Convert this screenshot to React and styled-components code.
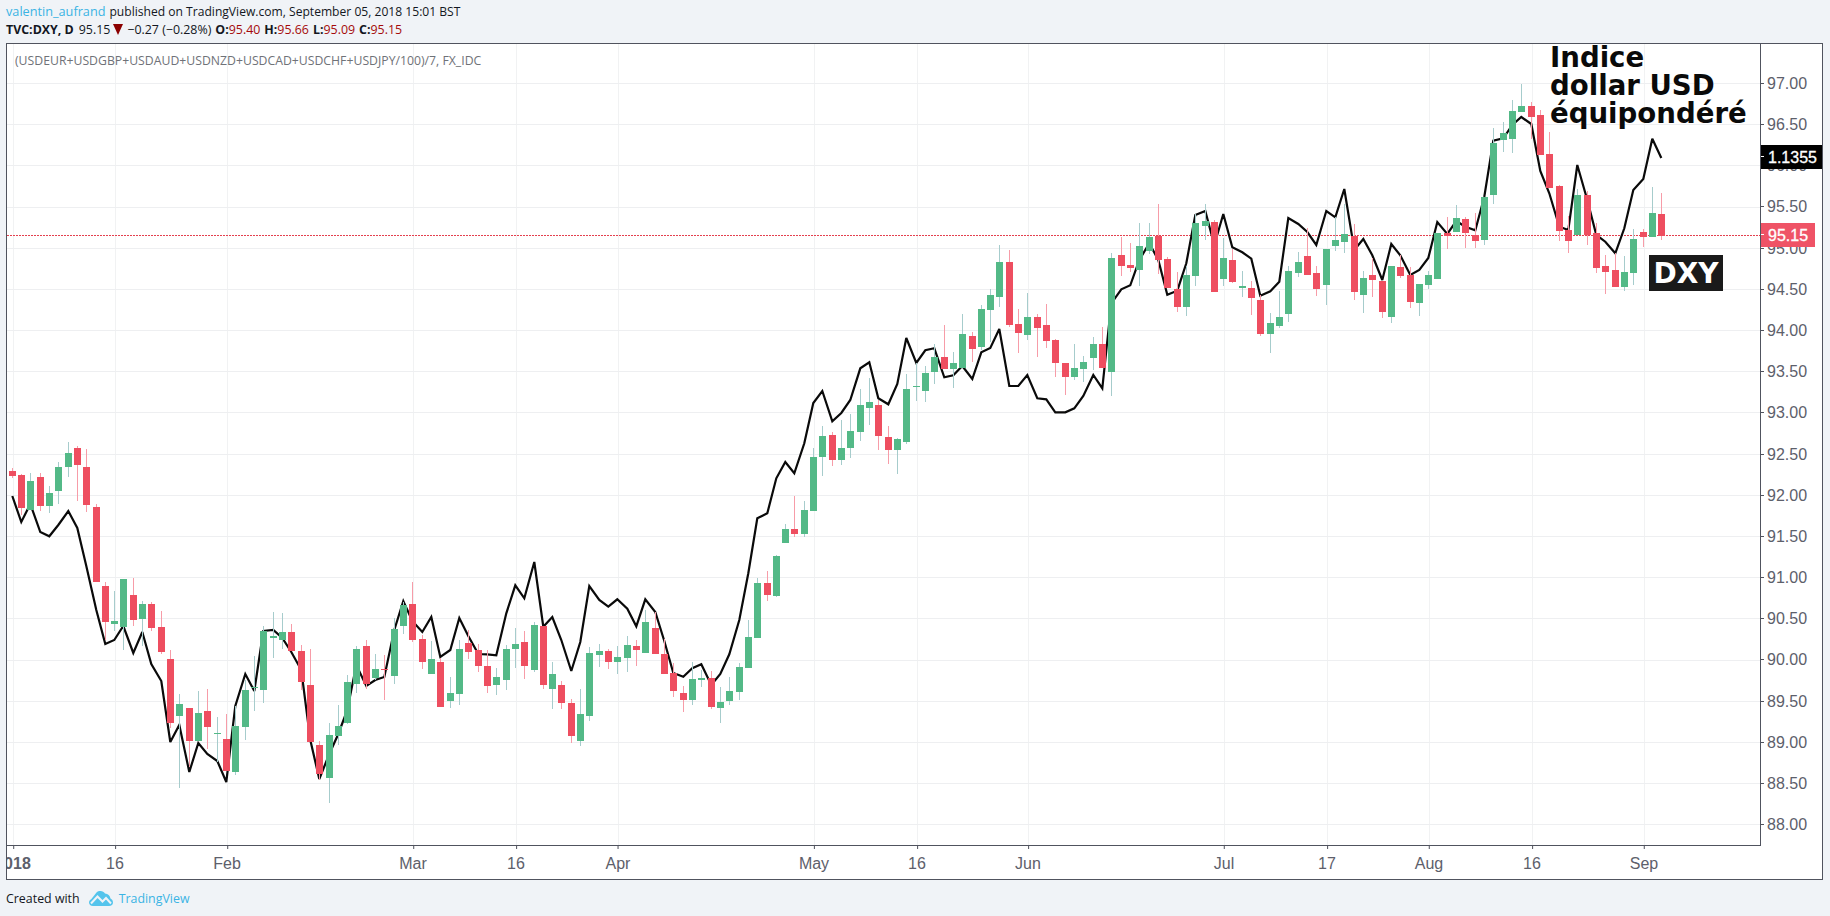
import React from "react";
import styled, { createGlobalStyle } from "styled-components";

const GlobalStyle = createGlobalStyle`
  html, body { margin: 0; padding: 0; background: #f0f3f7; }
  body { font-family: "Open Sans", "Liberation Sans", sans-serif; }
  #root { width: 1830px; height: 916px; overflow: hidden; }
`;

const Page = styled.div`
  width: 1830px;
  height: 916px;
  background: #f0f3f7;
  display: flex;
  flex-direction: column;
`;
const Header = styled.header`
  height: 43px;
  box-sizing: border-box;
  padding: 3px 0 0 6px;
  line-height: 17.5px;
  color: #131722;
  white-space: nowrap;
`;
const Line = styled.div`
  display: flex;
  align-items: center;
  height: 17.5px;
  font-size: ${(p) => p.$size}px;
`;
const Author = styled.span`
  color: #3bb3e4;
  font-size: 12.7px;
  margin-right: 4px;
`;
const Bold = styled.span`
  font-weight: 700;
  margin-left: ${(p) => p.$gap || 0}px;
`;
const Plain = styled.span`
  margin-left: ${(p) => p.$gap || 0}px;
`;
const Down = styled.span`
  color: #a50a0a;
`;
const Triangle = styled.svg`
  width: 10px;
  height: 11px;
  margin: 0 4px 0 3px;
  flex: none;
`;
const Frame = styled.main`
  width: 1817px;
  height: 837px;
  margin-left: 6px;
  box-sizing: border-box;
  border: 1px solid #50535e;
  background: #fff;
  display: grid;
  grid-template-columns: 1754px 61px;
  grid-template-rows: 802px 33px;
  overflow: hidden;
  position: relative;
`;
const Plot = styled.div`
  position: relative;
  box-sizing: border-box;
  border-right: 1px solid #50535e;
  border-bottom: 1px solid #50535e;
  overflow: hidden;
`;
const ChartSvg = styled.svg`
  display: block;
  width: 1753px;
  height: 801px;
`;
const StudyTitle = styled.div`
  position: absolute;
  left: 8px;
  top: 8px;
  font-size: 12.25px;
  line-height: 18px;
  color: #6f7278;
  white-space: nowrap;
`;
const Caption = styled.div`
  position: absolute;
  left: 1543px;
  top: 0;
  font-family: "DejaVu Sans", sans-serif;
  font-weight: 700;
  font-size: 27.6px;
  line-height: 28px;
  color: #0a0a0a;
`;
const Symbol = styled.div`
  position: absolute;
  left: 1642px;
  top: 211px;
  width: 74px;
  height: 36px;
  background: #1a1a1a;
  color: #fff;
  display: flex;
  align-items: center;
  justify-content: center;
  font-family: "DejaVu Sans", sans-serif;
  font-weight: 700;
  font-size: 28px;
`;
const PriceAxis = styled.div`
  position: relative;
  overflow: hidden;
  padding-top: 18.4px;
  box-sizing: border-box;
`;
const PriceRow = styled.div`
  position: relative;
  height: 41.18px;
  box-sizing: border-box;
  display: flex;
  align-items: center;
  padding: 2px 0 0 6px;
  font-family: "Liberation Sans", Arial, sans-serif;
  font-size: 16px;
  color: #5d606b;
  &::before {
    content: "";
    position: absolute;
    left: 0;
    top: 50%;
    width: 3px;
    height: 1px;
    background: #50535e;
  }
`;
const PriceTag = styled.div`
  position: absolute;
  left: 0;
  top: ${(p) => p.$top}px;
  width: ${(p) => p.$width}px;
  height: 24px;
  box-sizing: border-box;
  padding: 2px 0 0 7px;
  display: flex;
  align-items: center;
  background: ${(p) => p.$bg};
  color: #fff;
  font-family: "Liberation Sans", Arial, sans-serif;
  font-size: 16px;
  -webkit-text-stroke: 0.3px #fff;
  &::before {
    content: "";
    position: absolute;
    left: 0;
    top: 11px;
    width: 3px;
    height: 1px;
    background: #fff;
  }
`;
const TimeAxis = styled.div`
  position: relative;
  overflow: hidden;
`;
const TimeLabel = styled.span`
  position: absolute;
  top: 8px;
  transform: translateX(-50%);
  font-family: "Liberation Sans", Arial, sans-serif;
  font-size: 16px;
  line-height: 20px;
  font-weight: ${(p) => (p.$bold ? 700 : 400)};
  color: #5d606b;
  &::before {
    content: "";
    position: absolute;
    left: 50%;
    top: -8px;
    width: 1px;
    height: 3px;
    background: #50535e;
  }
`;
const Footer = styled.footer`
  height: 36px;
  display: flex;
  align-items: center;
  padding-left: 6px;
  font-size: 12.4px;
  color: #131722;
`;
const Logo = styled.svg`
  width: 24px;
  height: 15px;
  margin: 0 6px 0 9px;
`;
const Brand = styled.span`
  color: #3bb3e4;
`;

// Measured as [x, wick top, body top, body bottom, wick bottom, colour], in crops scaled 3x.
const toCandles = (ox, oy, rows) =>
  rows.map(([x, a, b, c, d, k]) => ({
    x: Math.floor(ox + x / 3),
    wt: Math.round(oy + a / 3),
    bt: Math.round(oy + b / 3),
    bb: Math.round(oy + c / 3),
    wb: Math.round(oy + d / 3),
    up: k === "G",
  }));

const candles = [
  ...toCandles(0, 420, [
    [37,143,153,168,175,"R"],[64,162,165,264,285,"R"],[91,159,183,270,270,"G"],[121,159,171,258,273,"R"],
    [148,198,219,258,279,"G"],[175,126,141,213,252,"G"],[205,66,99,141,171,"G"],[232,78,84,135,243,"R"],
    [259,87,141,255,276,"R"],[289,252,261,486,486,"R"],[316,486,498,606,660,"R"],[343,513,603,612,633,"G"],
    [370,477,477,621,690,"G"],[400,474,525,600,618,"R"],[427,543,552,597,678,"G"],[454,546,552,624,633,"R"],
    [484,573,621,696,702,"R"],[511,690,717,909,925,"R"],[538,822,852,888,1104,"G"],[568,864,864,963,1040,"R"],
    [595,813,879,963,963,"G"],[622,807,873,921,987,"R"],[652,891,939,942,1025,"G"],[679,882,957,1053,1053,"R"],
    [706,858,918,1056,1065,"G"],[736,780,810,921,960,"G"],[763,708,800,803,873,"G"],[790,618,633,810,849,"G"],
    [820,576,649,653,714,"G"],[847,579,636,660,687,"G"],[874,612,636,693,693,"R"],[904,675,693,786,810,"R"],
    [931,687,795,966,966,"R"],[958,963,975,1062,1080,"R"],[988,909,945,1074,1149,"G"],[1015,855,918,948,975,"G"],
    [1042,765,786,909,912,"G"],[1069,678,687,792,819,"G"],[1099,660,678,792,807,"R"],[1126,702,747,774,780,"G"],
    [1153,705,747,750,840,"R"],[1183,594,627,768,792,"G"],[1210,546,555,618,642,"G"],[1237,486,552,660,666,"R"],
    [1267,645,657,726,747,"R"],[1294,663,717,762,762,"G"],[1321,714,726,861,861,"R"],[1351,771,819,843,864,"G"],
    [1378,660,687,822,855,"G"],
  ]),
  ...toCandles(460, 480, [
    [25,450,489,516,537,"R"],[55,492,510,558,576,"R"],[82,510,558,618,639,"R"],[109,564,591,615,645,"G"],
    [139,495,507,600,630,"G"],[166,444,492,507,564,"G"],[193,453,486,558,597,"R"],[223,426,435,570,576,"G"],
    [250,438,438,615,627,"R"],[277,546,582,627,687,"G"],[304,603,615,669,687,"R"],[334,657,669,768,789,"R"],
    [361,627,702,783,798,"G"],[388,501,519,708,723,"G"],[418,492,513,525,561,"G"],[445,507,513,546,567,"R"],
    [472,498,531,546,582,"G"],[502,468,495,534,576,"G"],[529,480,498,510,558,"R"],[556,390,426,519,519,"G"],
    [586,396,444,522,522,"R"],[613,477,522,582,582,"R"],[640,549,579,633,651,"R"],[670,618,639,660,696,"R"],
    [697,546,597,660,675,"G"],[724,570,594,600,621,"G"],[754,573,594,681,687,"R"],[781,621,666,684,729,"G"],
    [808,591,633,663,675,"G"],[838,549,561,636,660,"G"],[865,420,471,564,564,"G"],[892,294,309,474,474,"G"],
    [922,273,309,345,363,"R"],[949,225,228,348,351,"G"],
  ]),
  ...toCandles(780, 220, [
    [16,912,927,970,970,"G"],[43,828,927,942,950,"R"],[73,843,870,942,950,"G"],[100,684,711,873,873,"G"],
    [127,618,648,711,768,"G"],[157,636,645,720,738,"R"],[184,600,684,720,735,"G"],[211,582,633,684,714,"G"],
    [241,507,555,636,663,"G"],[268,474,546,564,615,"G"],[295,540,555,648,690,"R"],[325,618,651,690,732,"R"],
    [352,654,657,690,762,"G"],[379,462,507,666,672,"G"],[409,430,498,500,543,"G"],[436,438,459,513,546,"G"],
    [463,372,411,456,492,"G"],[493,315,411,447,447,"R"],[520,396,429,447,504,"G"],[547,282,342,444,444,"G"],
    [577,336,348,387,426,"R"],[604,255,267,381,390,"G"],[631,207,225,270,366,"G"],[658,75,126,231,261,"G"],
    [688,90,126,315,321,"R"],[715,267,312,339,399,"R"],[742,219,291,345,360,"G"],[772,282,291,324,411,"R"],
    [799,252,315,363,384,"R"],[826,357,360,429,471,"R"],[856,429,429,471,525,"R"],[883,372,444,471,480,"G"],
    [910,408,426,447,486,"G"],[940,351,372,414,450,"G"],[967,321,372,444,444,"R"],[994,99,114,456,528,"G"],
    [1024,51,105,138,168,"R"],[1051,69,135,144,156,"R"],[1078,9,78,150,198,"G"],
  ]),
  ...toCandles(1140, 170, [
    [28,159,201,243,252,"G"],[55,102,197,270,312,"R"],[82,261,267,354,354,"R"],[112,306,357,411,426,"R"],
    [139,288,315,411,438,"G"],[166,132,159,318,348,"G"],[196,102,153,168,210,"G"],[223,150,156,366,366,"R"],
    [250,205,264,327,348,"G"],[277,237,270,336,340,"R"],[307,303,348,354,381,"G"],[334,333,354,384,435,"R"],
    [361,375,390,492,498,"R"],[391,429,459,492,549,"G"],[418,363,441,468,474,"G"],[445,288,303,432,456,"G"],
    [475,246,276,309,321,"G"],[502,174,258,315,315,"R"],[529,288,309,357,378,"R"],[559,237,237,345,405,"G"],
    [586,140,210,228,243,"G"],[613,102,192,216,249,"G"],[643,162,197,366,390,"R"],[670,303,324,375,429,"G"],
    [697,264,315,330,381,"R"],[727,333,333,426,444,"R"],[754,288,288,441,459,"G"],[781,255,291,318,324,"R"],
    [811,291,315,396,414,"R"],[838,342,342,399,438,"G"],[865,303,315,345,357,"G"],[892,189,189,327,327,"G"],
    [922,141,189,198,237,"R"],[949,105,144,186,186,"G"],[976,141,147,189,234,"R"],[1006,129,195,213,234,"R"],
    [1033,81,81,210,225,"G"],
  ]),
  ...toCandles(1440, 70, [
    [160,174,219,375,402,"G"],[190,156,189,210,246,"G"],[217,90,123,207,249,"G"],[244,42,108,126,126,"G"],
    [274,96,108,141,207,"R"],[301,120,135,255,255,"R"],[328,186,252,354,354,"R"],[358,345,348,483,513,"R"],
    [385,438,480,513,549,"R"],[412,357,375,495,495,"G"],[442,363,375,495,525,"R"],[469,459,489,594,609,"R"],
    [496,555,588,606,672,"R"],[526,549,600,651,651,"R"],[553,558,606,651,663,"G"],[580,477,507,609,645,"G"],
    [610,477,486,501,531,"R"],[637,351,429,501,501,"G"],[664,369,432,498,510,"R"],
  ]),
];

const toPoints = (ox, oy, rows) => rows.map(([x, y]) => `${(ox + x / 3).toFixed(1)},${(oy + y / 3).toFixed(1)}`);

const linePoints = [
  ...toPoints(0, 420, [
    [37,228],[64,306],[91,252],[121,336],[148,349],[175,315],[205,273],[232,324],[259,438],[289,570],[316,672],
    [343,660],[370,618],[400,699],[427,636],[454,732],[484,783],[511,966],[538,915],[568,1056],[595,969],
    [622,1002],[652,1023],[679,1086],[706,858],[736,762],[763,813],[790,633],[820,630],[847,654],[874,696],
    [904,750],[931,960],[958,1077],[988,1002],[1015,942],[1042,870],[1069,735],[1099,798],[1126,780],
    [1153,771],[1183,630],[1210,543],[1237,603],[1267,636],[1294,591],[1321,711],[1351,690],[1378,594],
  ]),
  ...toPoints(460, 480, [
    [25,468],[55,522],[82,523],[109,526],[139,400],[166,316],[193,355],[223,246],[250,440],[277,411],[304,480],
    [334,573],[361,486],[388,318],[418,360],[445,380],[472,358],[502,386],[529,439],[556,358],[586,396],
    [613,483],[640,579],[670,590],[697,565],[724,553],[754,615],[781,582],[808,523],[838,420],[865,280],
    [892,115],[922,100],[949,-5],
  ]),
  ...toPoints(780, 220, [
    [16,726],[43,760],[73,670],[100,549],[127,513],[157,604],[184,579],[211,540],[241,445],[268,427],[295,535],
    [325,553],[352,492],[379,354],[409,429],[436,391],[463,385],[493,472],[520,466],[547,438],[577,477],
    [604,397],[631,384],[658,327],[688,498],[715,498],[742,465],[772,535],[799,538],[826,577],[856,577],
    [883,565],[910,528],[940,465],[967,505],[994,250],[1024,208],[1051,196],[1078,120],[1108,70],
  ]),
  ...toPoints(1140, 170, [
    [55,270],[82,374],[112,362],[139,280],[166,135],[196,123],[223,225],[250,132],[277,232],[307,247],[334,266],
    [361,377],[391,364],[418,335],[445,144],[475,162],[502,186],[529,225],[559,123],[586,142],[613,57],
    [643,240],[670,207],[697,256],[727,330],[754,222],[781,256],[811,315],[838,300],[865,264],[892,156],
    [922,192],[949,153],[976,170],[1006,181],
  ]),
  ...toPoints(1440, 70, [
    [133,380],[160,212],[190,205],[217,165],[244,141],[274,162],[301,303],[328,370],[358,470],[385,480],
    [412,285],[442,390],[469,495],[496,515],[526,550],[553,475],[580,360],[610,327],[637,206],[664,264],
  ]),
].join(" ");

const priceY = (v) => Math.round(83 + (97 - v) * 82.37);
const prices = Array.from({ length: 19 }, (_, i) => (97 - i * 0.5).toFixed(2));
const gridY = prices.map((p) => priceY(Number(p)));

const timeTicks = [
  { x: 13, label: "2018", bold: true },
  { x: 115, label: "16" },
  { x: 227, label: "Feb" },
  { x: 413, label: "Mar" },
  { x: 516, label: "16" },
  { x: 618, label: "Apr" },
  { x: 814, label: "May" },
  { x: 917, label: "16" },
  { x: 1028, label: "Jun" },
  { x: 1224, label: "Jul" },
  { x: 1327, label: "17" },
  { x: 1429, label: "Aug" },
  { x: 1532, label: "16" },
  { x: 1644, label: "Sep" },
];

function Chart() {
  return (
    <ChartSvg viewBox="7 44 1753 801" aria-hidden="true">
      <g stroke="#f1f2f3" strokeWidth="1" shapeRendering="crispEdges">
        {timeTicks.map((t) => (
          <line key={t.x} x1={t.x + 0.5} x2={t.x + 0.5} y1="44" y2="845" />
        ))}
        {gridY.map((y) => (
          <line key={y} x1="7" x2="1760" y1={y + 0.5} y2={y + 0.5} stroke="#eeeff1" />
        ))}
      </g>
      <line x1="7" x2="1760" y1="235.5" y2="235.5" stroke="#e4404f" strokeWidth="1" strokeDasharray="2 1" shapeRendering="crispEdges" />
      <polyline points={linePoints} fill="none" stroke="#0a0a0a" strokeWidth="2.2" strokeLinejoin="miter" strokeMiterlimit="3" />
      <g shapeRendering="crispEdges">
        {candles.map((c) => (
          <g key={c.x}>
            <rect x={c.x} y={c.wt} width="1" height={Math.max(c.wb - c.wt, 1)} fill={c.up ? "#a6cccc" : "#f79ca8"} />
            <rect x={c.x - 3} y={c.bt} width="7" height={Math.max(c.bb - c.bt, 1)} fill={c.up ? "#53b987" : "#ee4e60"} />
          </g>
        ))}
      </g>
    </ChartSvg>
  );
}

export default function App() {
  return (
    <Page>
      <GlobalStyle />
      <Header>
        <Line $size={12.1}>
          <Author>valentin_aufrand</Author>
          <Plain>published on TradingView.com, September 05, 2018 15:01 BST</Plain>
        </Line>
        <Line $size={12.4}>
          <Bold>TVC:DXY, D</Bold>
          <Plain $gap={5}>95.15</Plain>
          <Triangle viewBox="0 0 10 11">
            <path d="M0 0H10L5 11Z" fill="#8b0000" />
          </Triangle>
          <Plain>−0.27 (−0.28%)</Plain>
          <Bold $gap={4}>O:</Bold>
          <Down>95.40</Down>
          <Bold $gap={4}>H:</Bold>
          <Down>95.66</Down>
          <Bold $gap={4}>L:</Bold>
          <Down>95.09</Down>
          <Bold $gap={4}>C:</Bold>
          <Down>95.15</Down>
        </Line>
      </Header>
      <Frame>
        <Plot>
          <Chart />
          <StudyTitle>(USDEUR+USDGBP+USDAUD+USDNZD+USDCAD+USDCHF+USDJPY/100)/7, FX_IDC</StudyTitle>
          <Caption>
            Indice
            <br />
            dollar USD
            <br />
            équipondéré
          </Caption>
          <Symbol>DXY</Symbol>
        </Plot>
        <PriceAxis>
          {prices.map((p) => (
            <PriceRow key={p}>{p}</PriceRow>
          ))}
          <PriceTag $top={101} $width={63} $bg="#000">1.1355</PriceTag>
          <PriceTag $top={179} $width={54} $bg="#ef5366">95.15</PriceTag>
        </PriceAxis>
        <TimeAxis>
          {timeTicks.map((t) => (
            <TimeLabel key={t.x} $bold={t.bold} style={{ left: t.x - 7 }}>
              {t.label}
            </TimeLabel>
          ))}
        </TimeAxis>
      </Frame>
      <Footer>
        Created with
        <Logo viewBox="0 0 24 15" aria-hidden="true">
          <path d="M4 15C1.5 15 0 13.400 0 11.500C0 9.800 1 8.800 2.200 8.200L7.500 1.500C8.500 .4 10 0 11.500 0C13.500 0 15 1 16 2.500C19 2.800 21 4.500 21.500 7.500C23 8.300 24 9.700 24 11.500C24 13.500 22.500 15 20 15Z" fill="#55c4ec" />
          <polyline points="2,12.500 8.500,5.500 13.500,10.500 17,7 22,12.500" fill="none" stroke="#f0f3f7" strokeWidth="2" />
        </Logo>
        <Brand>TradingView</Brand>
      </Footer>
    </Page>
  );
}
